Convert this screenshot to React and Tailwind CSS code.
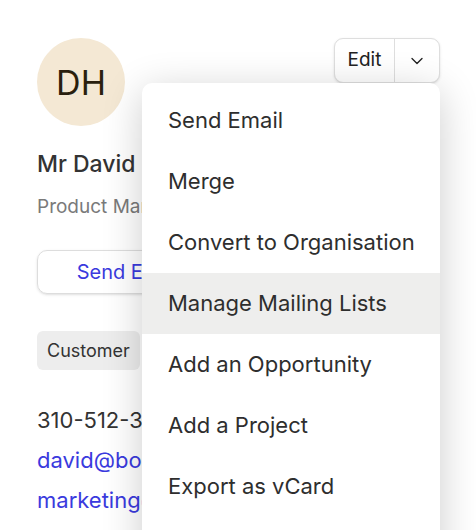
import { ChevronDown } from "lucide-react";

const menuItems = [
  "Send Email",
  "Merge",
  "Convert to Organisation",
  "Manage Mailing Lists",
  "Add an Opportunity",
  "Add a Project",
  "Export as vCard",
  "Delete",
];

export default function App() {
  return (
    <div
      className="relative h-[530px] w-[476px] overflow-hidden bg-white"
      style={{ fontFamily: "Inter, 'Noto Sans', sans-serif" }}
    >
      <div className="flex justify-between pl-[37px] pr-[36px] pt-[38px]">
        <div className="flex min-w-0 flex-1 flex-col whitespace-nowrap">
          <div className="flex h-[88px] w-[88px] items-center justify-center rounded-full bg-[#f4e8d4] text-[34px] text-[#2a1f0e]">
            DH
          </div>
          <div className="mt-[21px] text-[23px] font-medium text-[#333]">
            Mr David Hughes
          </div>
          <div className="mt-[11px] text-[19px] text-[#7a7a7a]">
            Product Manager
          </div>
          <button className="mt-[29px] h-[44px] w-[184px] rounded-[10px] border border-[#ddd] text-[20px] text-[#3a3ade] shadow-sm">
            Send Email
          </button>
          <div className="mt-[37px] flex">
            <span className="rounded-[6px] bg-[#ededed] px-[10px] py-[6px] text-[18px] text-[#333]">
              Customer
            </span>
          </div>
          <div className="mt-[35px] text-[22px] leading-[30px] text-[#333]">
            310-512-3344
          </div>
          <div className="mt-[10px] text-[22px] leading-[30px] text-[#3a3ade]">
            david@bostonhealth.com
          </div>
          <div className="mt-[10px] text-[22px] leading-[30px] text-[#3a3ade]">
            marketing@bostonhealth.com
          </div>
        </div>

        <div className="flex h-[45px] shrink-0 rounded-[9px] border border-[#dedede] bg-white shadow-sm">
          <button className="w-[60px] border-r border-[#dedede] text-[19px] text-[#222]">
            Edit
          </button>
          <button className="flex w-[44px] items-center justify-center text-[#222]">
            <ChevronDown size={20} strokeWidth={1.6} />
          </button>
        </div>
      </div>

      <div className="absolute left-[142px] top-[83px] w-[298px] rounded-[10px] bg-white py-[7px] shadow-[0_8px_40px_rgba(0,0,0,0.2)]">
        {menuItems.map((item) => (
          <div
            key={item}
            className={`flex h-[61px] items-center pl-[26px] text-[22px] text-[#2e2e2e] ${
              item === "Manage Mailing Lists" ? "bg-[#eeeeed]" : ""
            }`}
          >
            {item}
          </div>
        ))}
      </div>
    </div>
  );
}
